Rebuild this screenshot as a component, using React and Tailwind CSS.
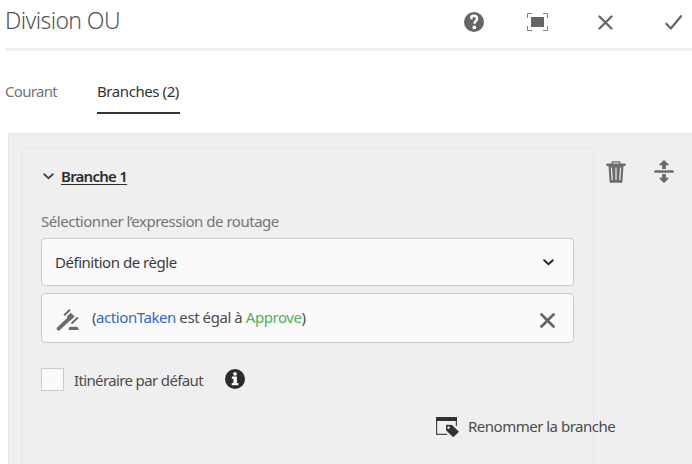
function HelpIcon() {
  return (
    <svg className="h-5 w-5" viewBox="0 0 20 20">
      <circle cx="10" cy="10" r="10" fill="#656565" />
      <path d="M7.500 7.200V4.500Q8.500 3.800 10 3.800Q13.100 3.800 13 6.500Q13 8.200 11.500 9.300Q10.600 10 10.600 11.800" fill="none" stroke="#fff" strokeWidth="2.500" />
      <circle cx="10.300" cy="15.400" r="1.900" fill="#fff" />
    </svg>
  );
}

function FullScreenIcon() {
  return (
    <svg className="h-[18px] w-[21px]" viewBox="0 0 21 18">
      <rect x="4" y="4" width="13" height="10" fill="#656565" />
      <path d="M.5 5V.5H5M16 .5h4.500V5M20.500 13v4.500H16M5 17.500H.5V13" fill="none" stroke="#808080" />
    </svg>
  );
}

function Cross({ className, weight }) {
  return (
    <svg className={className} viewBox="0 0 15 15" fill="none" stroke="#656565" strokeLinecap="round">
      <path d="M1.500 1.500L13.500 13.500M13.500 1.500L1.500 13.500" strokeWidth={weight} />
    </svg>
  );
}

function Chevron({ color }) {
  return (
    <svg className="h-[7px] w-[11px]" viewBox="0 0 11 7" fill="none" stroke={color}>
      <path d="M1.200 1.200L5.500 5.300L9.800 1.200" strokeWidth="1.900" strokeLinecap="round" />
    </svg>
  );
}

function TrashIcon() {
  return (
    <svg className="h-[22px] w-5" viewBox="0 0 20 22" fill="#6b6b6b">
      <path fillRule="evenodd" d="M5.500 2.600V1.200Q5.500.2 6.500.2h7Q14.500.2 14.500 1.200v1.400h4.500q.6 0 .6.600V5h-2.100l-1.200 16.200q0 .6-.6.600H4.300q-.6 0-.6-.6L2.500 5H.4V3.200q0-.6.6-.6zM6.800 2.600h6.400V1.500H6.800zM4.800 6.500l.8 12.500h1.200L6 6.500zM9.400 6.500V19h1.200V6.500zM14 6.500L13.200 19h1.200l.8-12.500z" />
    </svg>
  );
}

function SplitIcon() {
  return (
    <svg className="h-[23px] w-5" viewBox="0 0 20 23" fill="#6b6b6b">
      <rect x=".3" y="10.300" width="19.400" height="2.400" rx=".6" />
      <path d="M10 0l4.500 4.300v1h-2.600v3.600H8.100V5.300H5.500v-1zM10 23l4.500-4.300v-1h-2.600v-3.600H8.100v3.600H5.500v1z" />
    </svg>
  );
}

function GavelIcon() {
  return (
    <svg className="h-[22px] w-6" viewBox="0 0 24 22">
      <path d="M2.600 19.600L13 9.900" stroke="#6b6b6b" strokeWidth="3.800" strokeLinecap="round" />
      <path d="M14.700 3.800l4 3.800-4.200 4L10.600 7.700z" fill="#6b6b6b" />
      <path d="M8.700 5.700l4.700-4.500M16.100 14l5.200-4.900" stroke="#6b6b6b" strokeWidth="2" strokeLinecap="round" />
      <path d="M12.700 21v-1.200q0-2.100 2.200-2.100h5.300q2.300 0 2.300 2.100V21z" fill="#6b6b6b" />
    </svg>
  );
}

function InfoIcon() {
  return (
    <svg className="h-5 w-5 shrink-0" viewBox="0 0 20 20">
      <circle cx="10" cy="10" r="10" fill="#2b2b2b" />
      <circle cx="10" cy="4.800" r="1.900" fill="#fff" />
      <path d="M6.900 7.600h5v6.400h1.500v2.200H6.700V14h1.700V9.700H6.900z" fill="#fff" />
    </svg>
  );
}

function RenameIcon() {
  return (
    <svg className="h-5 w-[23px] shrink-0" viewBox="0 0 23 20">
      <path d="M.6 3v14.400H11M20.400 3v6" fill="none" stroke="#4a4a4a" strokeWidth="1.200" />
      <rect width="21" height="4" fill="#323232" />
      <path fillRule="evenodd" d="M10 8.600q0-.8.800-.8l5.200.2 6.500 6.300q.5.500 0 1l-4.700 4.500q-.5.400-1 0L10.200 13.500zM12.600 9.300a1.300 1.300 0 1 0 .01 0z" fill="#323232" />
    </svg>
  );
}

function Branch() {
  return (
    <section className="h-[330px] w-[573px] shrink-0 rounded border border-[#e7e7e7] pl-[19px] pt-4">
      <div className="flex h-6 items-center pl-[2px]">
        <div className="mt-px"><Chevron color="#4b4b4b" /></div>
        <h2 className="ml-[7px] text-[15px] font-semibold leading-6 tracking-[-0.75px] text-[#2c2c2c] underline decoration-1 underline-offset-2">Branche 1</h2>
      </div>
      <label className="mt-[21px] block h-6 text-[15px] leading-6 tracking-[-0.47px] text-[#747474]">Sélectionner l’expression de routage</label>
      <div className="mt-[5px] flex h-12 w-[533px] items-center justify-between rounded border border-[#cacaca] bg-[#fafafa] pl-[13px] pr-[19px] text-[15px] tracking-[-0.47px] text-[#3a3a3a]">
        <span>Définition de règle</span>
        <Chevron color="#252525" />
      </div>
      <div className="mt-[7px] flex h-[50px] w-[533px] items-center rounded border border-[#cacaca] bg-[#fafafa] pl-[14px] pr-[18px]">
        <div className="mt-[3px]"><GavelIcon /></div>
        <p className="mb-[2px] ml-[12px] text-[15px] tracking-[-0.43px] text-[#4b4b4b]">
          (<span className="text-[#2c68cf]">actionTaken</span> est égal à <span className="text-[#4fb05c]">Approve</span>)
        </p>
        <div className="ml-auto mt-[5px]"><Cross className="h-[15px] w-[15px]" weight="2.7" /></div>
      </div>
      <div className="mt-[24px] flex h-6 items-center">
        <span className="h-[23px] w-[23px] border border-[#cacaca] bg-[#fafafa]" />
        <span className="ml-[10px] mt-[2px] w-[151px] whitespace-nowrap text-[15px] tracking-[-0.63px] text-[#4b4b4b]">Itinéraire par défaut</span>
        <InfoIcon />
      </div>
      <div className="ml-[395px] mt-[24px] flex h-6 items-center whitespace-nowrap">
        <RenameIcon />
        <span className="mb-px ml-[9px] text-[15px] tracking-[-0.5px] text-[#4b4b4b]">Renommer la branche</span>
      </div>
    </section>
  );
}

export default function App() {
  return (
    <main className="h-[464px] w-[692px] overflow-hidden bg-white font-['Noto_Sans','Open_Sans',sans-serif]">
      <header className="ml-[5px] flex h-[51px] items-start border-b-[3px] border-[#f0f0f0]">
        <h1 className="w-[459px] text-[23px] font-light leading-[41px] tracking-[-0.6px] text-[#555555]">Division OU</h1>
        <div className="flex h-11 items-center">
          <HelpIcon />
          <div className="ml-[43px]"><FullScreenIcon /></div>
          <div className="ml-[50px]"><Cross className="h-[15px] w-[15px]" weight="2.3" /></div>
          <svg className="ml-[52px] h-[15px] w-[18px]" viewBox="0 0 18 15" fill="none" stroke="#656565">
            <path d="M1.300 8.700l4.600 4.700L16 1.200" strokeWidth="2.200" strokeLinecap="round" />
          </svg>
        </div>
      </header>
      <nav className="ml-[5px] flex h-[63px] pt-[28px] text-[15px] leading-6 tracking-[-0.42px]">
        <span className="w-[92px] tracking-[-0.7px] text-[#747474]">Courant</span>
        <span className="h-[35px] w-[83px] whitespace-nowrap border-b-2 border-[#323232] text-[#323232]">Branches (2)</span>
      </nav>
      <div className="ml-2 mt-[19px] flex h-[331px] items-start border-l border-t border-[#e5e5e5] bg-[#efefef] pl-[12px] pt-[13px]">
        <Branch />
        <div className="ml-[12px] mt-[13px] flex items-center">
          <TrashIcon />
          <div className="ml-[28px]"><SplitIcon /></div>
        </div>
      </div>
    </main>
  );
}
